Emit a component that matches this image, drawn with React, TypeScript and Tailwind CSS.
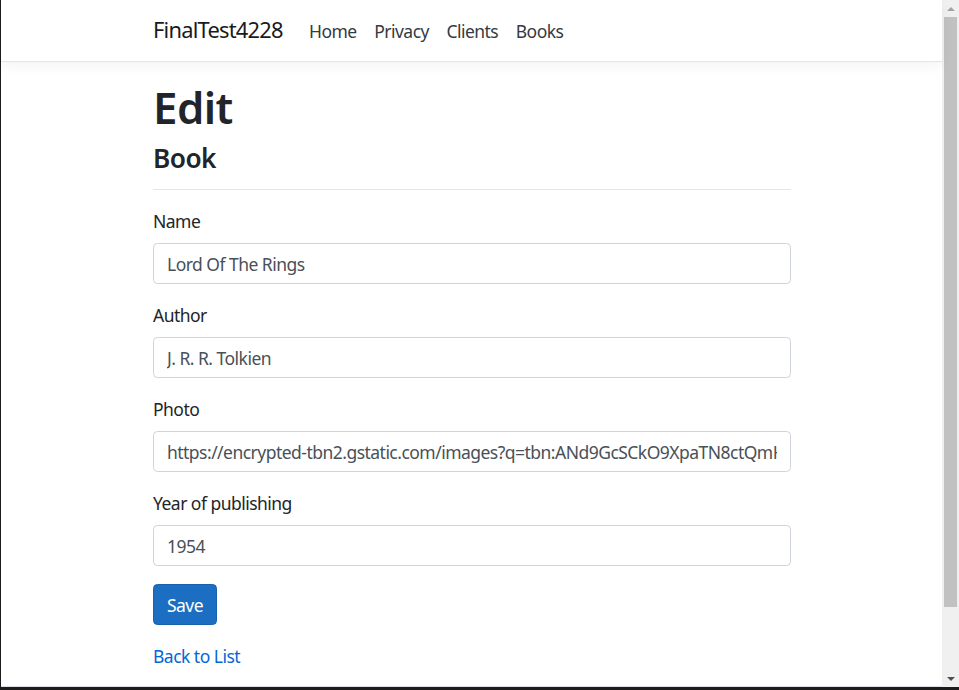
import React from "react";

const fields = [
  { label: "Name", value: "Lord Of The Rings" },
  { label: "Author", value: "J. R. R. Tolkien" },
  {
    label: "Photo",
    value:
      "https://encrypted-tbn2.gstatic.com/images?q=tbn:ANd9GcSCkO9XpaTN8ctQmH2e1fQjmZ3tq8W-L6bN0mYfE",
  },
  { label: "Year of publishing", value: "1954" },
];

function Scrollbar() {
  return (
    <div className="flex w-[17px] shrink-0 flex-col items-center bg-[#f0f0f0]">
      <div className="flex h-[17px] w-full items-center justify-center">
        <div className="h-0 w-0 border-x-[4px] border-b-[4px] border-x-transparent border-b-[#a3a3a3]" />
      </div>
      <div className="h-[590px] w-[13px] bg-[#c1c1c1]" />
      <div className="flex-1" />
      <div className="flex h-[17px] w-full items-center justify-center">
        <div className="h-0 w-0 border-x-[4px] border-t-[4px] border-x-transparent border-t-[#505050]" />
      </div>
    </div>
  );
}

export default function App() {
  return (
    <div
      className="flex h-[690px] w-[959px] overflow-hidden border-b-[3px] border-l border-[#1c1c1c] bg-white text-[17.5px] leading-[26.25px] tracking-[-0.03em] text-[#212529]"
      style={{ fontFamily: '"Noto Sans", "Open Sans", sans-serif' }}
    >
      <div className="flex min-w-0 flex-1 flex-col">
        <nav className="relative z-10 border-b border-[#e5e5e5] bg-white py-[8.75px] pl-[152px] shadow-[0_4px_13px_rgba(0,0,0,0.05)]">
          <div className="flex items-center">
            <a className="mr-[17.5px] py-[5.5px] text-[21.875px] leading-[32.8px] tracking-[-0.035em] text-[#1a1a1a]">
              FinalTest4228
            </a>
            <ul className="flex">
              {["Home", "Privacy", "Clients", "Books"].map((l) => (
                <li key={l}>
                  <a className="block px-[8.75px] py-[8.75px] text-[#343a40]">{l}</a>
                </li>
              ))}
            </ul>
          </div>
        </nav>

        <main className="mt-[18.5px] flex-1 pl-[152px]">
          <div className="w-[637.5px]">
            <h1 className="mb-[9.75px] text-[43.75px] font-semibold leading-[1.2]">Edit</h1>
            <h4 className="text-[26.25px] font-semibold leading-[1.2]">Book</h4>
            <hr className="mt-[14.5px] mb-[17.5px] border-t border-[rgba(0,0,0,0.1)]" />
            <form onSubmit={(e) => e.preventDefault()}>
              {fields.map((f) => (
                <div key={f.label} className="mb-[17.5px]">
                  <label className="mb-[8.75px] block">{f.label}</label>
                  <input
                    defaultValue={f.value}
                    className="block h-[41.5px] w-full rounded-[4.4px] border border-[#ced4da] bg-white px-[13px] pt-[2px] tracking-[-0.03em] text-[#495057] outline-none"
                  />
                </div>
              ))}
              <div className="mb-[17.5px]">
                <button
                  type="submit"
                  className="h-[41.5px] rounded-[4.4px] border border-[#1861ac] bg-[#1b6ec2] px-[13px] pt-[2px] tracking-[-0.03em] text-white"
                >
                  Save
                </button>
              </div>
            </form>
            <div>
              <a className="text-[#0366d6]">Back to List</a>
            </div>
          </div>
        </main>
        <div className="h-px border-t border-[#dee2e6]" />
      </div>
      <Scrollbar />
    </div>
  );
}
